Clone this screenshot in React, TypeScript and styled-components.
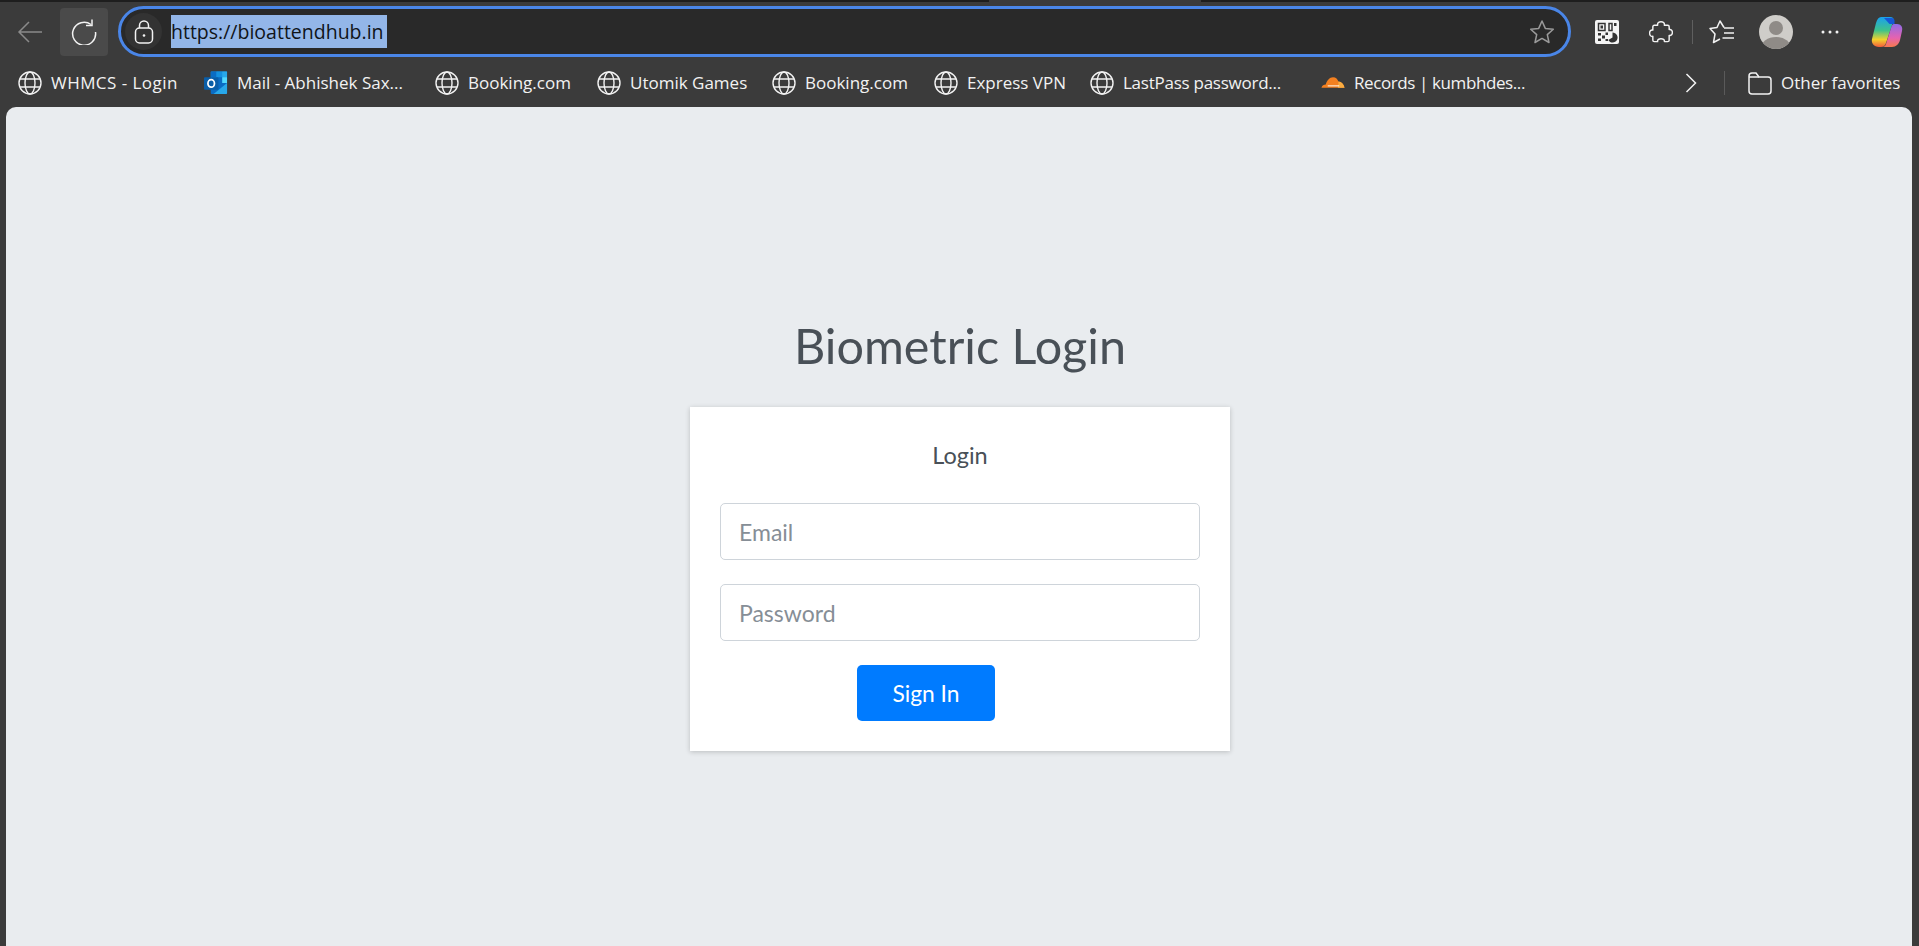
import React from "react";
import styled, { createGlobalStyle } from "styled-components";

const Global = createGlobalStyle`
  html, body { margin: 0; padding: 0; height: 100%; overflow: hidden; background: #3b3b3b; }
  #root { height: 100%; }
  * { box-sizing: border-box; }
`;

const Shell = styled.div`
  width: 1919px; height: 946px; display: flex; flex-direction: column;
  background: #3b3b3b; font-family: "Open Sans", "Noto Sans", sans-serif;
`;
const TabStrip = styled.div`display: flex; height: 2px; flex: none;`;
const TabEdge = styled.div<{ $w?: number; $clear?: boolean }>`
  height: 2px; background: ${p => (p.$clear ? "transparent" : "#1e1e1e")};
  ${p => (p.$w ? `width:${p.$w}px;flex:none;` : "flex:1;")}
`;
const Toolbar = styled.div`
  display: flex; align-items: center; height: 55px; flex: none; padding: 4px 0 0 0;
`;
const BackSlot = styled.div`
  width: 60px; height: 48px; flex: none; display: flex; align-items: center; justify-content: center;
`;
const ReloadBtn = styled.div`
  width: 48px; height: 48px; flex: none; border-radius: 4px; background: #4a4a4a;
  display: flex; align-items: center; justify-content: center;
`;
const Address = styled.div`
  width: 1453px; height: 51px; flex: none; margin-left: 10px; border: 3px solid #4a86e8; border-radius: 26px;
  background: #292929; display: flex; align-items: center; padding-left: 4px;
`;
const LockCircle = styled.div`
  width: 37px; height: 37px; flex: none; border-radius: 50%; background: #333333;
  display: flex; align-items: center; justify-content: center;
`;
const Url = styled.span`
  margin-left: 9px; height: 33px; width: 216px; flex: none; background: #93b6e8; color: #101418;
  font-size: 19.5px; line-height: 33px; white-space: nowrap;
`;
const StarSlot = styled.div`
  margin-left: auto; margin-right: 13px; display: flex; align-items: center;
`;
const Tool = styled.div<{ $w: number }>`
  width: ${p => p.$w}px; flex: none; height: 48px; display: flex; align-items: center; justify-content: center;
`;
const ToolDivider = styled.div`width: 1px; height: 24px; background: #5f5f5f; flex: none; margin-left: 13px;`;

const Bookmarks = styled.div`
  display: flex; align-items: center; height: 50px; flex: none; padding: 2px 0 0 18px; color: #f2f2f2; font-size: 17px;
`;
const Bookmark = styled.div<{ $gap: number }>`
  display: flex; align-items: center; flex: none; margin-right: ${p => p.$gap}px;
`;
const BookmarkLabel = styled.span<{ $w: number; $track?: number }>`
  width: ${p => p.$w}px; margin: -2px 0 0 9px; white-space: nowrap; flex: none;
  letter-spacing: ${p => p.$track ?? 0}px;
`;
const BarEnd = styled.div`margin-left: auto; display: flex; align-items: center; padding-right: 20px;`;
const BarDivider = styled.div`width: 1px; height: 24px; background: #5a5a5a; margin: 0 23px 0 27px;`;

const Page = styled.main`
  flex: 1; margin: 0 7px 0 6px; border-radius: 10px 10px 0 0; background: #e9ecef;
  display: flex; flex-direction: column; align-items: center; padding: 208px 0 0 2px;
  font-family: "Lato", "Open Sans", sans-serif; color: #495057;
`;
const Title = styled.h1`
  margin: 0; font-size: 48.5px; line-height: 60px; font-weight: 400; color: #495057;
`;
const Card = styled.form`
  margin-top: 32px; width: 540px; height: 344px; background: #fff; padding: 30px;
  box-shadow: 0 1px 5px rgba(0, 0, 0, .2); display: flex; flex-direction: column;
`;
const Subtitle = styled.p`
  margin: 0; text-align: center; font-size: 23.5px; line-height: 36px; color: #495057;
`;
const Field = styled.input`
  display: block; width: 480px; height: 57px; margin-top: 24px; padding: 0 18px; border: 1px solid #ced4da;
  border-radius: 5px; font: inherit; font-size: 23px; background: #fff; outline: none;
  &::placeholder { color: #868e96; opacity: 1; }
  &:first-of-type { margin-top: 30px; }
`;
const Submit = styled.button`
  align-self: flex-start; margin: 24px 0 0 137px; width: 138px; height: 56px; border: 0; border-radius: 5px;
  background: #007bff; color: #fff; font: inherit; font-size: 22.8px;
`;

const Globe = () => (
  <svg width="24" height="24" viewBox="0 0 24 24" fill="none" stroke="#f2f2f2" strokeWidth="1.4">
    <circle cx="12" cy="12" r="11" />
    <ellipse cx="12" cy="12" rx="5" ry="11" />
    <path d="M2 8h20M2 16h20" />
  </svg>
);
const Outlook = () => (
  <svg width="24" height="24" viewBox="0 0 25 24">
    <rect x="7" y="0" width="17" height="12" rx="1" fill="#1490df" />
    <rect x="7" y="0" width="6" height="6" fill="#0a6cc4" />
    <rect x="13" y="0" width="6" height="6" fill="#1490df" />
    <rect x="19" y="0" width="5" height="6" fill="#28a8ea" />
    <rect x="13" y="6" width="6" height="6" fill="#0a6cc4" />
    <rect x="19" y="6" width="5" height="6" fill="#50d9ff" />
    <path d="M7 12h17v10.500a1 1 0 0 1-1 1H8a1 1 0 0 1-1-1z" fill="#0a6cc4" />
    <path d="M10 23.500L24 12v10.500a1 1 0 0 1-1 1z" fill="#28a8ea" />
    <rect x="0" y="6" width="15" height="13" rx="1" fill="#0a5ea8" />
    <ellipse cx="7.500" cy="12.500" rx="3.400" ry="3.900" fill="none" stroke="#fff" strokeWidth="1.800" />
  </svg>
);
const Cloud = () => (
  <svg width="24" height="24" viewBox="0 0 25 24">
    <path d="M.5 17C1 14.500 3 13.500 5 13.500 6 9.500 9 6 12.500 6c3 0 5 2 5.500 4.500 3.500 0 6 3.500 6.500 6.500z" fill="#f38020" />
    <path d="M18 10.500c3.500 0 6 3.500 6.500 6.500H17.500c.7-2 .9-4 .5-6.500z" fill="#fbad41" />
    <path d="M7 15h12" stroke="#fff" strokeWidth="1" fill="none" />
  </svg>
);

const marks = [
  { label: "WHMCS - Login", w: 127, gap: 26, track: 0.45, icon: <Globe /> },
  { label: "Mail - Abhishek Sax...", w: 169, gap: 29, track: 0, icon: <Outlook /> },
  { label: "Booking.com", w: 103, gap: 26, track: 0, icon: <Globe /> },
  { label: "Utomik Games", w: 118, gap: 24, track: 0, icon: <Globe /> },
  { label: "Booking.com", w: 103, gap: 26, track: 0, icon: <Globe /> },
  { label: "Express VPN", w: 98, gap: 25, track: 0, icon: <Globe /> },
  { label: "LastPass password...", w: 158, gap: 40, track: -0.25, icon: <Globe /> },
  { label: "Records | kumbhdes...", w: 173, gap: 0, track: -0.4, icon: <Cloud /> },
];

export default function App() {
  return (
    <Shell>
      <Global />
      <TabStrip>
        <TabEdge $w={989} />
        <TabEdge $w={212} $clear />
        <TabEdge />
      </TabStrip>
      <Toolbar>
        <BackSlot>
          <svg width="26" height="24" viewBox="0 0 26 24" fill="none" stroke="#8a8a8a" strokeWidth="1.5">
            <path d="M25 12H2M12 2L2 12l10 10" />
          </svg>
        </BackSlot>
        <ReloadBtn>
          <svg width="26" height="26" viewBox="0 0 26 26" fill="none" stroke="#f2f2f2" strokeWidth="1.5">
            <path d="M20 5.500A11.500 11.500 0 1 0 24.500 13" />
            <path d="M21 .5v6h-6" />
          </svg>
        </ReloadBtn>
        <Address>
          <LockCircle>
            <svg width="20" height="24" viewBox="0 0 20 24" fill="none" stroke="#f2f2f2" strokeWidth="1.5">
              <rect x="1.500" y="8" width="17" height="15" rx="4" />
              <path d="M5.500 8V5.500a4.500 4.500 0 0 1 9 0V8" />
              <circle cx="10" cy="15.500" r="1.300" fill="#f2f2f2" stroke="none" />
            </svg>
          </LockCircle>
          <Url>https://bioattendhub.in</Url>
          <StarSlot>
            <svg width="26" height="26" viewBox="0 0 26 26" fill="none" stroke="#9a9a9a" strokeWidth="1.500">
              <path d="M13 2l3.300 7.400 8 .8-6 5.400 1.700 7.900L13 19.400l-7 4.100 1.700-7.900-6-5.400 8-.8z" strokeLinejoin="round" />
            </svg>
          </StarSlot>
        </Address>
        <Tool $w={71}>
          <svg width="24" height="24" viewBox="0 0 24 24">
            <rect width="24" height="24" rx="2" fill="#f4f4f4" />
            <g fill="none" stroke="#333" strokeWidth="1.500">
              <rect x="3.500" y="3.500" width="6.500" height="7" />
              <rect x="14" y="3.500" width="3" height="7" />
            </g>
            <rect x="5.500" y="5.500" width="2.500" height="3" fill="#333" />
            <path d="M19 3h2.500v3H19zM3 13h3v2.500H3zM7 15.500h3v3H7zM3 18.500h3V21H3zM10.500 12.500h2.500v2.500h-2.500zM10.500 19h2.500v2h-2.500z" fill="#333" />
            <path d="M17.500 12.500a5 5 0 1 1-4.200 7.600l4.200-2.600z" fill="#333" />
          </svg>
        </Tool>
        <Tool $w={37}>
          <svg width="24" height="24" viewBox="0 0 25 24" fill="none" stroke="#f2f2f2" strokeWidth="1.500" strokeLinejoin="round">
            <path d="M9 5C8 0 17 0 16 5h3.500A1.500 1.500 0 0 1 21 6.500V9.500C25.500 8.500 25.500 16.500 21 15.500V20.500A1.500 1.500 0 0 1 19.500 22H16C17 18 8 18 9 22H5.500A1.500 1.500 0 0 1 4 20.500V16.500C-.5 17.500 -.5 9 4 10V6.500A1.500 1.500 0 0 1 5.500 5z" />
          </svg>
        </Tool>
        <ToolDivider />
        <Tool $w={58}>
          <svg width="26" height="24" viewBox="0 0 26 24" fill="none" stroke="#f2f2f2" strokeWidth="1.500" strokeLinejoin="round">
            <path d="M15 7.500L11 1 8 7.500 1 8.500l5 5.500-1.500 8.500 6.500-3.500" />
            <path d="M15 8h10M15 13h10M13.500 18h11.500" />
          </svg>
        </Tool>
        <Tool $w={50}>
          <svg width="34" height="34" viewBox="0 0 34 34">
            <defs>
              <clipPath id="av"><circle cx="17" cy="17" r="17" /></clipPath>
            </defs>
            <g clipPath="url(#av)">
              <rect width="34" height="34" fill="#cfcdc9" />
              <circle cx="17" cy="13" r="7" fill="#8f8b87" />
              <ellipse cx="17" cy="33" rx="15" ry="11" fill="#8f8b87" />
            </g>
          </svg>
        </Tool>
        <Tool $w={58}>
          <svg width="18" height="4" viewBox="0 0 18 4" fill="#f2f2f2">
            <circle cx="2" cy="2" r="1.500" />
            <circle cx="9" cy="2" r="1.500" />
            <circle cx="16" cy="2" r="1.500" />
          </svg>
        </Tool>
        <Tool $w={56}>
          <svg width="32" height="32" viewBox="0 0 32 32">
            <defs>
              <linearGradient id="c1" x1="0" y1="0" x2="0" y2="1">
                <stop offset="0" stopColor="#1aa0ee" />
                <stop offset=".45" stopColor="#3fc38a" />
                <stop offset=".75" stopColor="#f2d12c" />
                <stop offset="1" stopColor="#f25c3c" />
              </linearGradient>
              <linearGradient id="c2" x1="0" y1="0" x2="0" y2="1">
                <stop offset="0" stopColor="#8f6be8" />
                <stop offset=".6" stopColor="#e563b0" />
                <stop offset="1" stopColor="#f8794e" />
              </linearGradient>
            </defs>
            <path d="M10 1h9c3 0 4 1.500 3.500 3.500L15 27c-.7 2.500-2.500 4-5 4H8c-5 0-8-4-7-8L5 7c1-4 3-6 5-6z" fill="url(#c1)" />
            <path d="M13 2h7c3 0 3.500 2 3.500 3v3h-5z" fill="#1558d6" />
            <path d="M23 8h3c4 0 6 3 5 7l-2 9c-1 4-4 7-8 7H11c2 0 3.500-1 4-3l5-16c.5-2 1.500-4 3-4z" fill="url(#c2)" />
          </svg>
        </Tool>
      </Toolbar>
      <Bookmarks>
        {marks.map((m, i) => (
          <Bookmark key={i} $gap={m.gap}>
            {m.icon}
            <BookmarkLabel $w={m.w} $track={m.track}>{m.label}</BookmarkLabel>
          </Bookmark>
        ))}
        <BarEnd>
          <svg width="12" height="20" viewBox="0 0 12 20" fill="none" stroke="#f2f2f2" strokeWidth="1.500">
            <path d="M1.500 1l9 9-9 9" />
          </svg>
          <BarDivider />
          <svg width="24" height="24" viewBox="0 0 24 24" fill="none" stroke="#f2f2f2" strokeWidth="1.500">
            <path d="M1 5a3 3 0 0 1 3-3h4l3 4h9a3 3 0 0 1 3 3v11a3 3 0 0 1-3 3H4a3 3 0 0 1-3-3z" />
            <path d="M1 6h10" />
          </svg>
          <BookmarkLabel $w={118}>Other favorites</BookmarkLabel>
        </BarEnd>
      </Bookmarks>
      <Page>
        <Title>Biometric Login</Title>
        <Card onSubmit={e => e.preventDefault()}>
          <Subtitle>Login</Subtitle>
          <Field type="email" placeholder="Email" />
          <Field type="password" placeholder="Password" />
          <Submit type="submit">Sign In</Submit>
        </Card>
      </Page>
    </Shell>
  );
}
